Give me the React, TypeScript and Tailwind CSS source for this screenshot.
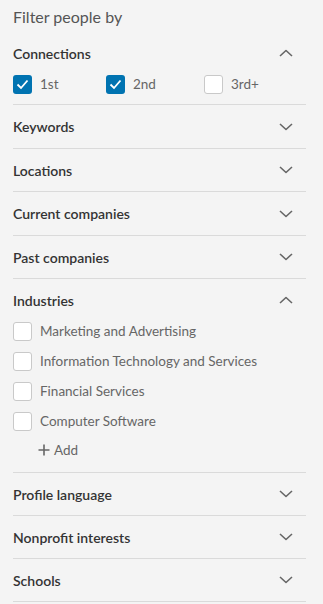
import { useState } from 'react';

type Section = { key: string; label: string; h: string };

const collapsedTop: Section[] = [
  { key: 'keywords', label: 'Keywords', h: 'h-[43px]' },
  { key: 'locations', label: 'Locations', h: 'h-[42px]' },
  { key: 'current', label: 'Current companies', h: 'h-[43px]' },
  { key: 'past', label: 'Past companies', h: 'h-[42px]' },
];

const collapsedBottom: Section[] = [
  { key: 'language', label: 'Profile language', h: 'h-[42px]' },
  { key: 'nonprofit', label: 'Nonprofit interests', h: 'h-[42px]' },
  { key: 'schools', label: 'Schools', h: 'h-[42px]' },
];

const industries = [
  'Marketing and Advertising',
  'Information Technology and Services',
  'Financial Services',
  'Computer Software',
];

function Chevron({ up }: { up?: boolean }) {
  return (
    <svg width="14" height="8" viewBox="0 0 14 8" className="text-[#666]">
      <polyline
        points={up ? '1,7 7,1.5 13,7' : '1,1 7,6.5 13,1'}
        fill="none"
        stroke="currentColor"
        strokeWidth="1.6"
        strokeLinejoin="round"
      />
    </svg>
  );
}

function Box({ checked, onClick }: { checked: boolean; onClick: () => void }) {
  return (
    <button
      onClick={onClick}
      className={
        checked
          ? 'w-[19px] h-[19px] rounded-[3px] bg-[#0073b1] flex items-center justify-center shrink-0'
          : 'w-[19px] h-[19px] rounded-[3px] bg-white border border-[#c9c9c9] shrink-0'
      }
    >
      {checked && (
        <svg width="13" height="11" viewBox="0 0 13 11">
          <polyline points="1.5,5.5 5,9 11.5,1.5" fill="none" stroke="white" strokeWidth="1.8" />
        </svg>
      )}
    </button>
  );
}

function Header({ label, up, h }: { label: string; up?: boolean; h: string }) {
  return (
    <div className={`flex items-center justify-between pr-[13px] ${h}`}>
      <span className="text-[14px] font-semibold text-[#333]">{label}</span>
      <Chevron up={up} />
    </div>
  );
}

export default function App() {
  const [conn, setConn] = useState<Record<string, boolean>>({ '1st': true, '2nd': true, '3rd+': false });
  const [ind, setInd] = useState<Record<string, boolean>>({});

  return (
    <div className="min-h-[604px] bg-[#f4f4f4] pl-[13px] pr-[17px] font-['Lato',sans-serif]">
      <div className="h-[32px] flex items-center pt-[2px] text-[16px] text-[#555]">Filter people by</div>

      <div className="border-b border-[#dadada]">
        <Header label="Connections" up h="h-[42px]" />
        <div className="flex pb-[10px]">
          {['1st', '2nd', '3rd+'].map((c, idx) => (
            <label key={c} className={`flex items-center gap-[8px] h-[20px] ${idx === 0 ? 'w-[93px]' : 'w-[98px]'}`}>
              <Box checked={conn[c]} onClick={() => setConn({ ...conn, [c]: !conn[c] })} />
              <span className="text-[13.5px] text-[#666]">{c}</span>
            </label>
          ))}
        </div>
      </div>

      {collapsedTop.map((s) => (
        <div key={s.key} className="border-b border-[#dadada]">
          <Header label={s.label} h={s.h} />
        </div>
      ))}

      <div className="border-b border-[#dadada]">
        <Header label="Industries" up h="h-[42px]" />
        <div className="flex flex-col gap-[10px]">
          {industries.map((i) => (
            <label key={i} className="flex items-center gap-[8px] h-[20px]">
              <Box checked={!!ind[i]} onClick={() => setInd({ ...ind, [i]: !ind[i] })} />
              <span className="text-[13.5px] text-[#666]">{i}</span>
            </label>
          ))}
        </div>
        <button className="flex items-center gap-[4px] h-[20px] mt-[9px] mb-[12px] ml-[25px] text-[13.5px] text-[#666]">
          <svg width="12" height="12" viewBox="0 0 12 12">
            <path d="M6 0.5v11M0.5 6h11" stroke="currentColor" strokeWidth="1.6" />
          </svg>
          Add
        </button>
      </div>

      {collapsedBottom.map((s) => (
        <div key={s.key} className="border-b border-[#dadada]">
          <Header label={s.label} h={s.h} />
        </div>
      ))}
    </div>
  );
}
